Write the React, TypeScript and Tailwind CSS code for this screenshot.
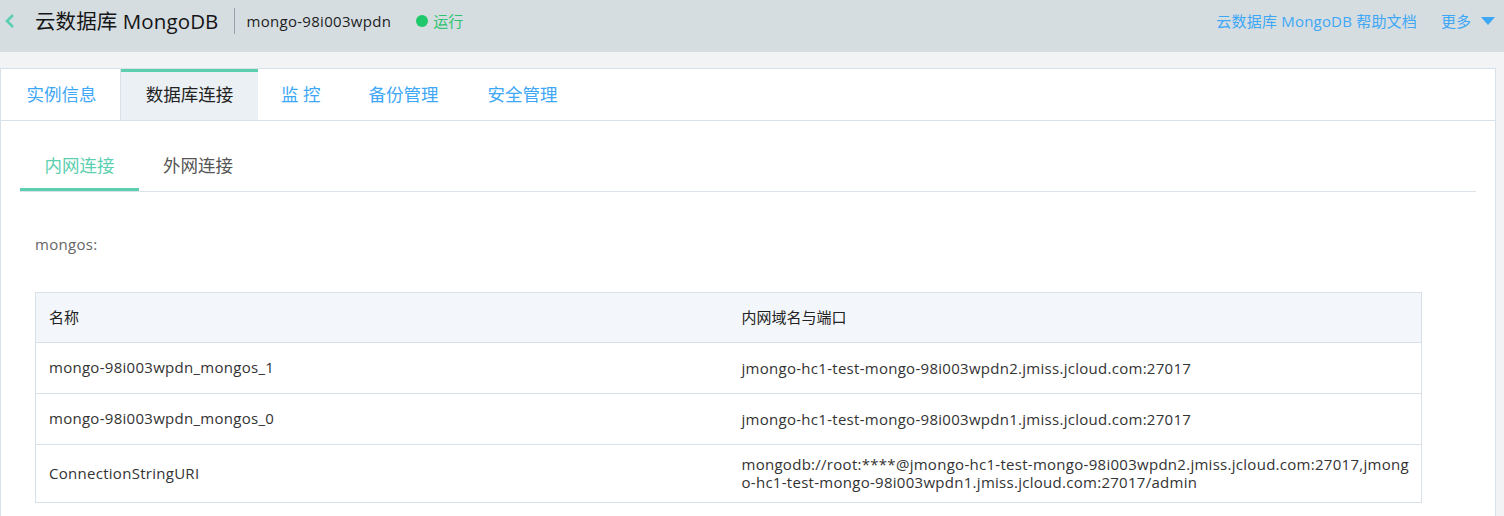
import React from "react";

const FONT = '"Open Sans", "Noto Sans CJK SC", sans-serif';

export default function App() {
  const rows: [string, React.ReactNode][] = [
    ["mongo-98i003wpdn_mongos_1", "jmongo-hc1-test-mongo-98i003wpdn2.jmiss.jcloud.com:27017"],
    ["mongo-98i003wpdn_mongos_0", "jmongo-hc1-test-mongo-98i003wpdn1.jmiss.jcloud.com:27017"],
    [
      "ConnectionStringURI",
      <>
        mongodb://root:****@jmongo-hc1-test-mongo-98i003wpdn2.jmiss.jcloud.com:27017,jmong
        <br />
        o-hc1-test-mongo-98i003wpdn1.jmiss.jcloud.com:27017/admin
      </>,
    ],
  ];
  return (
    <div className="min-h-[516px] bg-[#f2f3f5]" style={{ fontFamily: FONT }}>
      {/* header */}
      <div className="flex h-[52px] items-center bg-[#d5dde1] pb-[10px]">
        <div className="flex items-center pl-[4px]">
          <svg width="12" height="16" viewBox="0 0 12 16" className="mr-[19px]">
            <path d="M9 2 L3 8 L9 14" fill="none" stroke="#5ccfb0" strokeWidth="2.6" />
          </svg>
          <span className="text-[20.5px] leading-none tracking-[0.1px] text-[#151515]">云数据库 MongoDB</span>
          <span className="ml-[16px] mr-[11px] h-[26px] w-px bg-[#9aa2a7]" />
          <span className="text-[15px] tracking-[0.3px] text-[#1e1e1e]">mongo-98i003wpdn</span>
          <span className="ml-[25px] h-[12px] w-[12px] rounded-full bg-[#1fc96b]" />
          <span className="ml-[5px] text-[15px] text-[#2ec46f]">运行</span>
        </div>
        <div className="ml-auto flex items-center pr-[9px]">
          <span className="text-[15px] tracking-[0.2px] text-[#3ea7f6]">云数据库 MongoDB 帮助文档</span>
          <span className="ml-[24px] text-[15px] text-[#3ea7f6]">更多</span>
          <svg width="14" height="9" viewBox="0 0 14 9" className="ml-[10px]">
            <path d="M0 0 H14 L7 8 Z" fill="#3ea7f6" />
          </svg>
        </div>
      </div>

      <div className="h-[16px]" />

      {/* card */}
      <div className="mr-[8px] border border-[#d9e1e8] bg-white pb-[40px]">
        {/* tabs */}
        <div className="flex h-[52px] border-b border-[#d9e1e8] text-[17.5px]">
          <div className="flex w-[120px] items-center justify-center border-r border-[#d9e1e8] pl-[2px] text-[#3ea7f6]">
            实例信息
          </div>
          <div className="flex w-[137px] items-center justify-center border-t-[3px] border-[#5ccfb0] bg-[#ebf0f4] pb-[3px] text-[#222]">
            数据库连接
          </div>
          <div className="flex items-center pl-[23px] pr-[24px] text-[#3ea7f6]">监 控</div>
          <div className="flex items-center pl-[24px] pr-[24px] text-[#3ea7f6]">备份管理</div>
          <div className="flex items-center pl-[25px] pr-[24px] text-[#3ea7f6]">安全管理</div>
        </div>

        {/* sub tabs */}
        <div className="mx-[19px] mt-[22px] flex border-b border-[#dce3ea] text-[17.5px]">
          <div className="-mb-px flex h-[48px] w-[119px] items-center justify-center border-b-[3px] border-[#5ccfb0] text-[#5ccfb0]">
            内网连接
          </div>
          <div className="flex h-[48px] items-center pb-[3px] pl-[24px] text-[#555]">外网连接</div>
        </div>

        <div className="ml-[34px] mt-[41px] text-[15px] tracking-[0.3px] text-[#666]">mongos:</div>

        {/* table */}
        <div className="ml-[34px] mt-[36px] w-[1387px] border border-[#d9e1e8] text-[15px] tracking-[0.28px] text-[#333]">
          <div className="flex h-[50px] items-center border-b border-[#d9e1e8] bg-[#f3f6fa] tracking-normal text-[#222]">
            <div className="w-1/2 px-[13px]">名称</div>
            <div className="w-1/2 px-[13px]">内网域名与端口</div>
          </div>
          {rows.map((r, i) => (
            <div
              key={i}
              className={
                "flex items-center " +
                (i < rows.length - 1 ? "h-[51px] border-b border-[#d9e1e8]" : "h-[57px]")
              }
            >
              <div className="w-1/2 px-[13px]">{r[0]}</div>
              <div className="w-1/2 whitespace-nowrap px-[13px] leading-[18px]">{r[1]}</div>
            </div>
          ))}
        </div>
      </div>
    </div>
  );
}
